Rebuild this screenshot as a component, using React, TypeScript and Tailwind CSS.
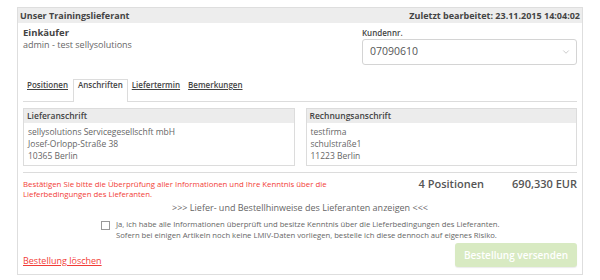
import { ChevronDown } from 'lucide-react';

const font = { fontFamily: '"Open Sans", "Liberation Sans", sans-serif' };

function AddressBox({ title, lines }: { title: string; lines: string[] }) {
  return (
    <div className="flex-1 border border-[#dcdcdc]">
      <div className="bg-[#ececec] px-[3px] h-[14px] leading-[14px] text-[8.5px] font-semibold text-[#444]">{title}</div>
      <div className="px-[4px] pt-[3px] pb-[3px] text-[8.5px] leading-[12px] text-[#666]">
        {lines.map((l) => (
          <div key={l}>{l}</div>
        ))}
      </div>
    </div>
  );
}

export default function App() {
  return (
    <div style={font} className="w-[600px] h-[280px] bg-white pt-[7px] pl-[17px] pr-[17px]">
      <div className="border border-[#dedede] h-[268px] flex flex-col">
        <div className="bg-[#ededed] h-[15px] flex items-center justify-between px-[2px] text-[9px] font-bold text-[#444]">
          <span>Unser Trainingslieferant</span>
          <span>Zuletzt bearbeitet: 23.11.2015 14:04:02</span>
        </div>

        <div className="flex justify-between px-[5px] pt-[4px]">
          <div>
            <div className="text-[9.5px] font-bold text-[#444] leading-[12px]">Einkäufer</div>
            <div className="text-[9px] text-[#666] leading-[11px]">admin - test sellysolutions</div>
          </div>
          <div className="w-[215px]">
            <div className="text-[8px] font-semibold text-[#444] leading-[12px]">Kundennr.</div>
            <div className="h-[26px] border border-[#d4d4d4] rounded-[3px] flex items-center justify-between pl-[7px] pr-[5px]">
              <span className="text-[10.5px] text-[#555]">07090610</span>
              <ChevronDown size={10} strokeWidth={1.2} className="text-[#999]" />
            </div>
          </div>
        </div>

        <div className="mx-[5px] mt-[14px] flex items-start border-b border-[#dcdcdc] h-[23px] text-[8px] font-semibold text-[#444] leading-[10px]">
          <span className="px-[4px] pt-[1px] underline">Positionen</span>
          <span className="px-[4px] ml-[1px] border border-b-0 border-[#dcdcdc] bg-white h-[23px]">Anschriften</span>
          <span className="px-[4px] pt-[1px] underline">Liefertermin</span>
          <span className="px-[4px] pt-[1px] underline">Bemerkungen</span>
        </div>

        <div className="mx-[5px] mt-[6px] flex gap-[11px]">
          <AddressBox
            title="Lieferanschrift"
            lines={['sellysolutions Servicegesellschft mbH', 'Josef-Orlopp-Straße 38', '10365 Berlin']}
          />
          <AddressBox title="Rechnungsanschrift" lines={['testfirma', 'schulstraße1', '11223 Berlin']} />
        </div>

        <div className="mx-[5px] mt-[6px] border-t border-[#dcdcdc] pt-[6px] flex items-start justify-between">
          <div className="w-[305px] text-[7.8px] leading-[10px] text-[#f23c36]">
            Bestätigen Sie bitte die Überprüfung aller Informationen und Ihre Kenntnis über die Lieferbedingungen des Lieferanten.
          </div>
          <div className="flex gap-[28px] text-[11px] font-semibold text-[#555] leading-[10px]">
            <span>4 Positionen</span>
            <span>690,330 EUR</span>
          </div>
        </div>

        <div className="mt-[3px] text-center text-[9px] text-[#666] leading-[12px]">
          &gt;&gt;&gt; Liefer- und Bestellhinweise des Lieferanten anzeigen &lt;&lt;&lt;
        </div>

        <div className="mt-[5px] flex items-start pl-[83px]">
          <div className="mt-[2px] w-[9px] h-[9px] border border-[#999] bg-white shrink-0" />
          <div className="ml-[6px] text-[7.7px] leading-[10.5px] text-[#666]">
            <div>Ja, ich habe alle Informationen überprüft und besitze Kenntnis über die Lieferbedingungen des Lieferanten.</div>
            <div>Sofern bei einigen Artikeln noch keine LMIV-Daten vorliegen, bestelle ich diese dennoch auf eigenes Risiko.</div>
          </div>
        </div>

        <div className="mx-[5px] mt-auto pb-[7px] flex items-end justify-between">
          <span className="text-[9px] leading-[12px] text-[#f23c36] underline">Bestellung löschen</span>
          <div className="w-[122px] h-[24px] rounded-[3px] bg-[#d8eac2] shadow-[0_1px_1px_rgba(0,0,0,0.08)] flex items-center justify-center text-[10px] font-semibold text-white">
            Bestellung versenden
          </div>
        </div>
      </div>
    </div>
  );
}
